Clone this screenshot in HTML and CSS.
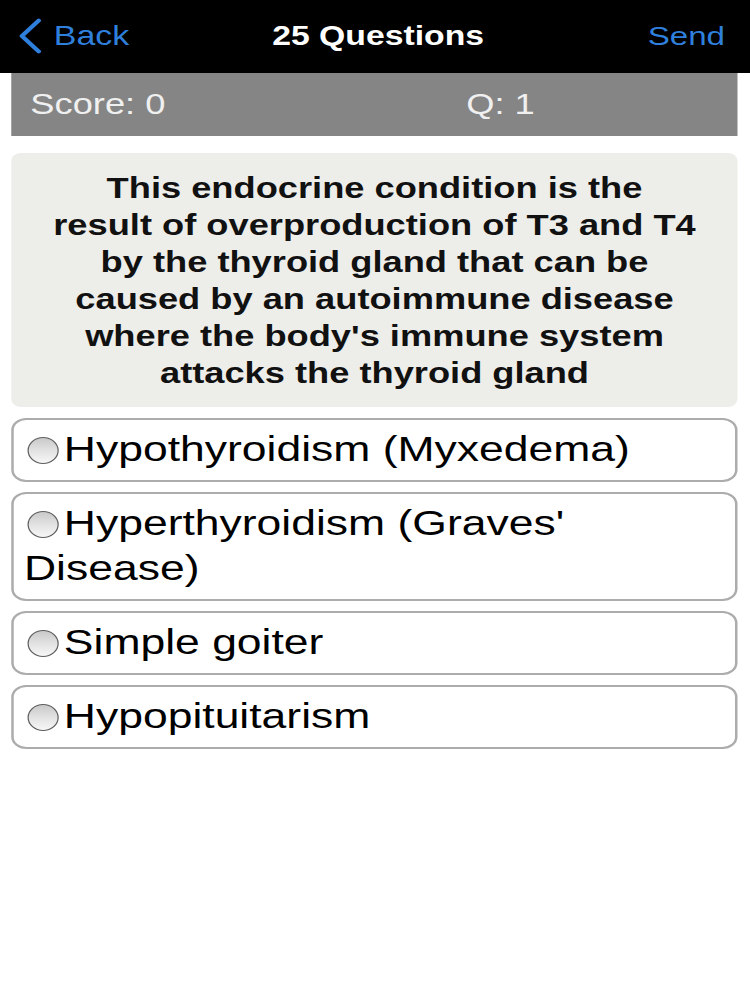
FILE: index.html
```html
<!DOCTYPE html>
<html>
<head>
<meta charset="utf-8">
<link rel="stylesheet" href="styles.css">
</head>
<body>
<div class="screen">
  <div class="nav">
    <div class="nav-left">
      <svg class="chev" width="20" height="36" viewBox="0 0 20 36"><path d="M17 2.5 L3.5 18 L17 33.5" fill="none" stroke="#2f7fdc" stroke-width="3.6" stroke-linecap="round" stroke-linejoin="round"/></svg>
      <span class="nav-link">Back</span>
    </div>
    <div class="nav-title">25 Questions</div>
    <div class="nav-right"><span class="nav-link">Send</span></div>
  </div>
  <div class="page">
    <div class="scorebar">
      <span class="score">Score: 0</span>
      <span class="qnum">Q: 1</span>
    </div>
    <div class="question">This endocrine condition is the<br>result of overproduction of T3 and T4<br>by the thyroid gland that can be<br>caused by an autoimmune disease<br>where the body's immune system<br>attacks the thyroid gland</div>
    <div class="options">
      <div class="option"><span class="radio"></span>Hypothyroidism (Myxedema)</div>
      <div class="option"><span class="radio"></span>Hyperthyroidism (Graves' Disease)</div>
      <div class="option"><span class="radio"></span>Simple goiter</div>
      <div class="option"><span class="radio"></span>Hypopituitarism</div>
    </div>
  </div>
</div>
</body>
</html>
```
FILE: styles.css
```css
html, body {
  margin: 0;
  padding: 0;
  background: #ffffff;
  font-family: "Liberation Sans", Arial, Helvetica, sans-serif;
  overflow: hidden;
}
/* the reference is a phone screenshot stretched horizontally by 1.25 */
.screen {
  width: 600px;
  transform: scaleX(1.25);
  transform-origin: 0 0;
}
.nav {
  height: 73px;
  background: #000;
  display: grid;
  grid-template-columns: 1fr auto 1fr;
  align-items: center;
  padding: 0 20px 0 14px;
}
.nav-left {
  display: flex;
  align-items: center;
  gap: 9px;
  margin-top: -1px;
}
.chev { display: block; }
.nav-link {
  color: #2f7fdc;
  font-size: 26.5px;
}
.nav-left .nav-link { font-size: 27.2px; }
.nav-title {
  color: #fff;
  font-weight: bold;
  font-size: 27px;
  margin-left: 11px;
}
.nav-right {
  text-align: right;
  margin-top: -1px;
}
.page {
  padding: 0 9.6px 0 8.8px;
}
.scorebar {
  height: 63px;
  background: #858585;
  display: flex;
  align-items: center;
  color: #f0f0f0;
  font-size: 29px;
  padding-left: 15.5px;
}
.score { width: 348.7px; }
.question {
  margin-top: 17px;
  background: #ededea;
  border-radius: 8px;
  padding: 16.5px 0 15.5px;
  text-align: center;
  font-weight: bold;
  font-size: 29px;
  line-height: 37px;
  color: #111;
  white-space: nowrap;
}
.options {
  margin-top: 11px;
  display: flex;
  flex-direction: column;
  gap: 10px;
}
.option {
  border: 2px solid #acacac;
  border-radius: 12px;
  padding: 7px 8px 8px 8.4px;
  font-size: 35.6px;
  line-height: 45px;
  color: #000;
}
.radio {
  display: inline-block;
  width: 25px;
  height: 27px;
  border-radius: 50%;
  border: 1.6px solid #5e5e5e;
  box-sizing: border-box;
  background: linear-gradient(#c9c9c9 0%, #e2e2e2 50%, #f7f7f7 100%);
  margin: 0 4.5px 0 2.4px;
  vertical-align: middle;
  position: relative;
  top: -1px;
}
```
